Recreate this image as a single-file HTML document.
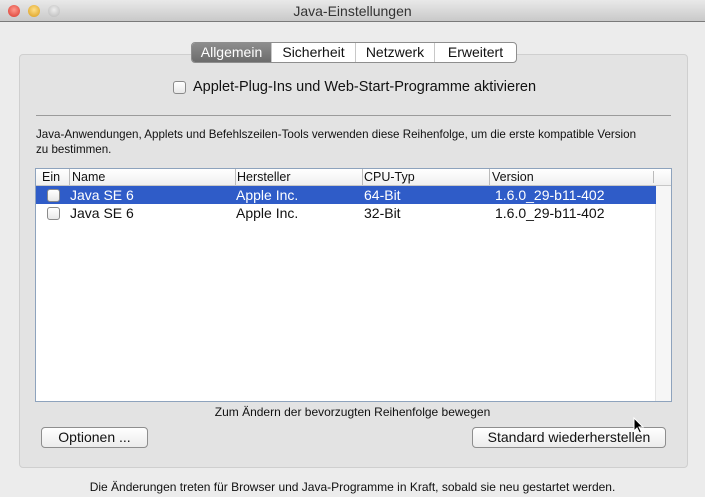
<!DOCTYPE html>
<html><head><meta charset="utf-8"><style>
*{margin:0;padding:0;box-sizing:border-box}
body{width:705px;height:497px;background:#ececec;font-family:"Liberation Sans",sans-serif;color:#111;position:relative;overflow:hidden}
.abs{position:absolute}
#title{left:0;top:0;width:705px;height:22px;background:linear-gradient(#e9e9e9,#c9c9c9);border-bottom:1px solid #7a7a7a;text-align:center;font-size:14px;line-height:22px;color:#333}
.dot{width:12px;height:12px;border-radius:50%;top:5px}
#group{left:19px;top:54px;width:669px;height:414px;background:#e3e3e3;border:1px solid #cfcfcf;border-radius:4px}
#tabs{left:191px;top:42px;height:21px;width:326px;background:#fff;border:1px solid #8e8e8e;border-radius:4px;display:flex;font-size:14px;overflow:hidden}
#tabs div{line-height:19px;text-align:center;border-right:1px solid #c8c8c8;white-space:nowrap}
.cb{width:13px;height:13px;border:1px solid #8a8a8a;border-radius:3px;background:linear-gradient(#fff,#e8e8e8)}
#table{left:35px;top:168px;width:637px;height:234px;background:#fff;border:1px solid #8ea3bd}
.hdr{left:0;top:0;width:635px;height:17px;border-bottom:1px solid #c7c7c7;background:linear-gradient(#fff,#f0f0f0);font-size:12.5px;line-height:16px}
.row{left:0;width:620px;height:18px;font-size:14px;line-height:18px}
.btn{height:21px;border:1px solid #8e8e8e;border-radius:4px;background:linear-gradient(#fff,#ececec);font-size:14px;text-align:center;line-height:19px}
</style></head><body>
<div id="title" class="abs">Java-Einstellungen</div>
<div class="abs dot" style="left:8px;background:radial-gradient(circle at 50% 40%,#ff9a8e,#d8352a)"></div>
<div class="abs dot" style="left:28px;background:radial-gradient(circle at 50% 40%,#ffe08a,#d99a16)"></div>
<div class="abs dot" style="left:48px;background:radial-gradient(circle at 50% 40%,#eee,#b5b5b5)"></div>
<div id="group" class="abs"></div>
<div id="tabs" class="abs">
<div style="width:80px;background:linear-gradient(#8d8d8d,#6c6c6c);color:#fff">Allgemein</div>
<div style="width:84px">Sicherheit</div>
<div style="width:79px">Netzwerk</div>
<div style="width:81px;border:none">Erweitert</div>
</div>
<div class="abs cb" style="left:173px;top:81px"></div>
<div class="abs" style="left:193px;top:79px;font-size:14.5px;white-space:nowrap">Applet-Plug-Ins und Web-Start-Programme aktivieren</div>
<div class="abs" style="left:36px;top:115px;width:635px;height:1px;background:#9b9b9b"></div>
<div class="abs" style="left:36px;top:127px;line-height:15px;width:650px;font-size:11.6px">Java-Anwendungen, Applets und Befehlszeilen-Tools verwenden diese Reihenfolge, um die erste kompatible Version<br>zu bestimmen.</div>
<div id="table" class="abs">
<div class="abs hdr">
<span class="abs" style="left:6px">Ein</span>
<span class="abs" style="left:33px;border-left:1px solid #bbb;padding-left:2px">Name</span>
<span class="abs" style="left:199px;border-left:1px solid #bbb;padding-left:1px">Hersteller</span>
<span class="abs" style="left:326px;border-left:1px solid #bbb;padding-left:1px">CPU-Typ</span>
<span class="abs" style="left:453px;border-left:1px solid #bbb;padding-left:2px">Version</span>
<span class="abs" style="left:617px;top:2px;height:12px;border-left:1px solid #bbb"></span>
</div>
<div class="abs" style="left:619px;top:17px;width:16px;height:215px;background:#f6f6f6;border-left:1px solid #e4e4e4"></div>
<div class="abs row" style="top:17px;background:#2f5cc8;color:#fff">
<div class="abs cb" style="left:11px;top:3px"></div>
<span class="abs" style="left:34px">Java SE 6</span><span class="abs" style="left:200px">Apple Inc.</span><span class="abs" style="left:328px">64-Bit</span><span class="abs" style="left:459px">1.6.0_29-b11-402</span></div>
<div class="abs row" style="top:35px">
<div class="abs cb" style="left:11px;top:3px"></div>
<span class="abs" style="left:34px">Java SE 6</span><span class="abs" style="left:200px">Apple Inc.</span><span class="abs" style="left:328px">32-Bit</span><span class="abs" style="left:459px">1.6.0_29-b11-402</span></div>
</div>
<div class="abs" style="left:0;width:705px;text-align:center;top:405px;font-size:12px">Zum Ändern der bevorzugten Reihenfolge bewegen</div>
<div class="abs btn" style="left:41px;top:427px;width:107px">Optionen ...</div>
<div class="abs btn" style="left:472px;top:427px;width:194px">Standard wiederherstellen</div>
<svg class="abs" style="left:633px;top:417px" width="12" height="18" viewBox="0 0 12 18"><path d="M1 1 L1 14 L4 11 L6.5 16 L8.5 15 L6 10 L10 10 Z" fill="#000" stroke="#fff" stroke-width="1"/></svg>
<div class="abs" style="left:0;width:705px;text-align:center;top:480px;font-size:12px">Die Änderungen treten für Browser und Java-Programme in Kraft, sobald sie neu gestartet werden.</div>
</body></html>
